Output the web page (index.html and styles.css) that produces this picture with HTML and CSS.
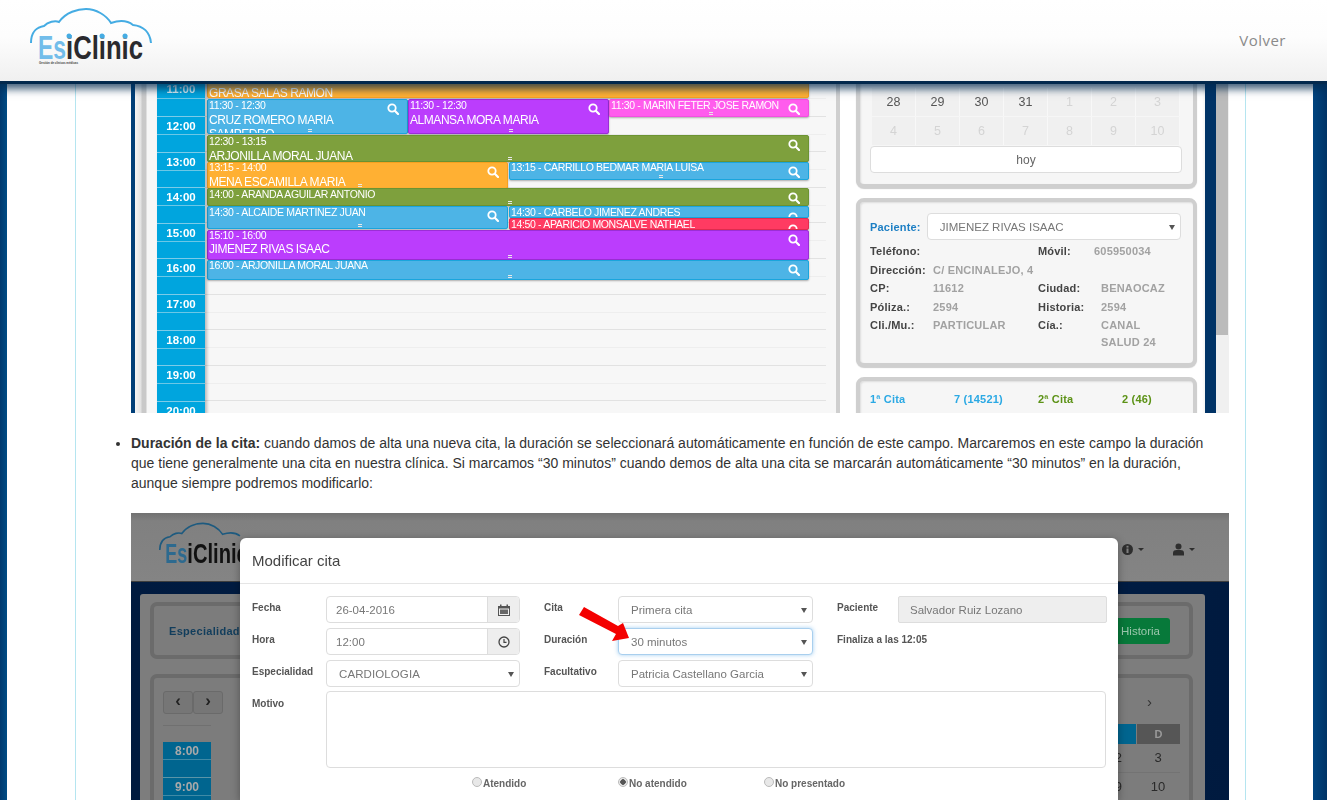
FILE: index.html
```html
<!DOCTYPE html>
<html lang="es">
<head>
    <meta charset="UTF-8">
    <title>EsiClinic - Ayuda</title>
    <link rel="stylesheet" href="styles.css">
</head>
<body>
    <header class="topbar">
        <svg class="logo" width="130" height="70" viewBox="0 0 130 70">
            <path class="logo-cloud" d="M3 37C3 26 9 21 16 20C20 16 27 14 31 16C38 6 50 3 58 3C68 3 78 9 83 17C92 14 100 15 105 19C115 20 122 26 123 37"/>
            <text class="logo-esi" x="10" y="53" textLength="28" lengthAdjust="spacingAndGlyphs">Es</text>
            <text class="logo-clinic" x="38" y="53" textLength="77" lengthAdjust="spacingAndGlyphs">iClinic</text>
            <circle class="logo-dot" cx="41" cy="30" r="2.500"/>
            <circle class="logo-dot" cx="74" cy="30" r="2.500"/>
            <circle class="logo-dot" cx="97" cy="30" r="2.500"/>
            <text class="logo-sub" x="11" y="58" textLength="39" lengthAdjust="spacingAndGlyphs">Gestión de clínicas médicas</text>
        </svg>
        <a class="back" href="#">Volver</a>
    </header>

    <div class="page">
        <main class="panel">
            <!-- primera captura: agenda y ficha de paciente -->
            <section class="shot shot-agenda">
                <div class="agenda-side">
                    <div class="agenda-hour first"><span>11:00</span></div>
                    <div class="agenda-hour"><span>12:00</span></div>
                    <div class="agenda-hour"><span>13:00</span></div>
                    <div class="agenda-hour"><span>14:00</span></div>
                    <div class="agenda-hour"><span>15:00</span></div>
                    <div class="agenda-hour"><span>16:00</span></div>
                    <div class="agenda-hour"><span>17:00</span></div>
                    <div class="agenda-hour"><span>18:00</span></div>
                    <div class="agenda-hour"><span>19:00</span></div>
                    <div class="agenda-hour"><span>20:00</span></div>
                </div>
                <div class="agenda-grid">
                    <div class="ev orange ev-grasa"><b class="ev-name">GRASA SALAS RAMON</b></div>
                    <div class="ev blue ev-cruz"><span>11:30 - 12:30</span><b class="ev-name">CRUZ ROMERO MARIA<br>SAMPEDRO</b><svg class="lens" viewBox="0 0 12 12"><use href="#lens"/></svg><i class="grip"></i></div>
                    <div class="ev purple ev-almansa"><span>11:30 - 12:30</span><b class="ev-name">ALMANSA MORA MARIA</b><svg class="lens" viewBox="0 0 12 12"><use href="#lens"/></svg><i class="grip"></i></div>
                    <div class="ev pink ev-marin"><span>11:30 - MARIN FETER JOSE RAMON</span><svg class="lens" viewBox="0 0 12 12"><use href="#lens"/></svg><i class="grip"></i></div>
                    <div class="ev green ev-arjonilla"><span>12:30 - 13:15</span><b class="ev-name">ARJONILLA MORAL JUANA</b><svg class="lens" viewBox="0 0 12 12"><use href="#lens"/></svg><i class="grip"></i></div>
                    <div class="ev orange ev-mena"><span>13:15 - 14:00</span><b class="ev-name">MENA ESCAMILLA MARIA</b><svg class="lens" viewBox="0 0 12 12"><use href="#lens"/></svg><i class="grip"></i></div>
                    <div class="ev blue ev-carrillo"><span>13:15 - CARRILLO BEDMAR MARIA LUISA</span><svg class="lens" viewBox="0 0 12 12"><use href="#lens"/></svg><i class="grip"></i></div>
                    <div class="ev green ev-aranda"><span>14:00 - ARANDA AGUILAR ANTONIO</span><svg class="lens" viewBox="0 0 12 12"><use href="#lens"/></svg><i class="grip"></i></div>
                    <div class="ev blue ev-alcaide"><span>14:30 - ALCAIDE MARTINEZ JUAN</span><svg class="lens" viewBox="0 0 12 12"><use href="#lens"/></svg><i class="grip"></i></div>
                    <div class="ev blue ev-carbelo"><span>14:30 - CARBELO JIMENEZ ANDRES</span><svg class="lens" viewBox="0 0 12 12"><use href="#lens"/></svg></div>
                    <div class="ev red ev-aparicio"><span>14:50 - APARICIO MONSALVE NATHAEL</span><svg class="lens" viewBox="0 0 12 12"><use href="#lens"/></svg></div>
                    <div class="ev purple ev-jimenez"><span>15:10 - 16:00</span><b class="ev-name">JIMENEZ RIVAS ISAAC</b><svg class="lens" viewBox="0 0 12 12"><use href="#lens"/></svg><i class="grip"></i></div>
                    <div class="ev blue ev-arjonilla2"><span>16:00 - ARJONILLA MORAL JUANA</span><svg class="lens" viewBox="0 0 12 12"><use href="#lens"/></svg><i class="grip"></i></div>
                </div>
                <div class="agenda-info">
                    <div class="card card-month">
                        <div class="month-row">
                            <span class="on">28</span><span class="on">29</span><span class="on">30</span><span class="on">31</span><span>1</span><span>2</span><span>3</span>
                        </div>
                        <div class="month-row">
                            <span>4</span><span>5</span><span>6</span><span>7</span><span>8</span><span>9</span><span>10</span>
                        </div>
                        <div class="today">hoy</div>
                    </div>
                    <div class="card card-patient">
                        <div class="patient-top">
                            <label>Paciente:</label>
                            <div class="fake-select">JIMENEZ RIVAS ISAAC<i class="arrow"></i></div>
                        </div>
                        <dl class="patient-data">
                            <dt>Teléfono:</dt><dd></dd><dt class="c3">Móvil:</dt><dd class="c4 phone">605950034</dd>
                            <dt>Dirección:</dt><dd class="wide">C/ ENCINALEJO, 4</dd>
                            <dt>CP:</dt><dd>11612</dd><dt class="c3">Ciudad:</dt><dd class="c4">BENAOCAZ</dd>
                            <dt>Póliza.:</dt><dd>2594</dd><dt class="c3">Historia:</dt><dd class="c4">2594</dd>
                            <dt>Cli./Mu.:</dt><dd>PARTICULAR</dd><dt class="c3">Cía.:</dt><dd class="c4">CANAL<br>SALUD 24</dd>
                        </dl>
                    </div>
                    <div class="card card-stats">
                        <span class="st-blue">1ª Cita</span><span class="st-blue">7 (14521)</span><span class="st-green">2ª Cita</span><span class="st-green">2 (46)</span>
                        <span class="st-purple">Tratamiento</span><span class="st-purple">3 (8)</span><span class="st-orange">Revisión</span><span class="st-orange">3 (6684)</span>
                    </div>
                </div>
                <div class="shot-edge"><i class="scroll-thumb"></i></div>
            </section>

            <ul class="help-list">
                <li><strong>Duración de la cita:</strong> cuando damos de alta una nueva cita, la duración se seleccionará automáticamente en función de este campo. Marcaremos en este campo la duración que tiene generalmente una cita en nuestra clínica. Si marcamos “30 minutos” cuando demos de alta una cita se marcarán automáticamente “30 minutos” en la duración, aunque siempre podremos modificarlo:</li>
            </ul>

            <!-- segunda captura: modal de modificar cita -->
            <section class="shot shot-modal">
                <div class="dim-top">
                    <svg class="logo dim-logo" width="103" height="55" viewBox="0 0 130 70">
                        <path class="logo-cloud" d="M3 37C3 26 9 21 16 20C20 16 27 14 31 16C38 6 50 3 58 3C68 3 78 9 83 17C92 14 100 15 105 19"/>
                        <text class="logo-esi" x="10" y="53" textLength="28" lengthAdjust="spacingAndGlyphs">Es</text>
                        <text class="logo-clinic" x="38" y="53" textLength="77" lengthAdjust="spacingAndGlyphs">iClinic</text>
                    </svg>
                    <div class="dim-tools">
                        <svg width="13" height="13" viewBox="0 0 13 13"><circle cx="6.500" cy="6.500" r="5.500" fill="#2e2e2e"/><rect x="5.500" y="5.500" width="2" height="4.500" fill="#808080"/><rect x="5.500" y="2.800" width="2" height="1.800" fill="#808080"/></svg>
                        <i class="caret"></i>
                        <svg class="dim-user" width="13" height="13" viewBox="0 0 13 13"><circle cx="6.500" cy="3.500" r="3" fill="#2e2e2e"/><path d="M1 12.500V9.500C1 7.800 3 7 4.500 7H8.500C10 7 12 7.800 12 9.500V12.500Z" fill="#2e2e2e"/></svg>
                        <i class="caret"></i>
                    </div>
                </div>
                <div class="dim-body">
                    <div class="dim-panel">
                        <div class="dim-card dim-filter">
                            <b>Especialidad</b>
                            <span class="dim-btn">Historia</span>
                        </div>
                        <div class="dim-card dim-cal">
                            <div class="dim-left">
                                <div class="dim-nav"><span>&lsaquo;</span><span>&rsaquo;</span></div>
                                <div class="dim-empty"></div>
                                <div class="dim-hour">8:00</div>
                                <div class="dim-hour">9:00</div>
                            </div>
                            <div class="dim-right">
                                <div class="dim-next">&rsaquo;</div>
                                <div class="dim-week"><i></i><span>D</span></div>
                                <div class="dim-day"><span>2</span><span>3</span></div>
                                <div class="dim-day"><span>9</span><span>10</span></div>
                            </div>
                        </div>
                    </div>
                </div>

                <div class="modal">
                    <h4 class="modal-title">Modificar cita</h4>
                    <form class="modal-form">
                        <label class="lead">Fecha</label>
                        <div class="field group">
                            <span class="value">26-04-2016</span>
                            <span class="addon"><svg width="12" height="12" viewBox="0 0 12 12"><path d="M0 2H2V0.500H3.500V2H8.500V0.500H10V2H12V12H0ZM1 4.500V11H11V4.500Z" fill="#555"/><path d="M2 5.500H10V10H2Z" fill="#666"/></svg></span>
                        </div>
                        <label>Cita</label>
                        <div class="field select"><span class="value">Primera cita</span><i class="arrow"></i></div>
                        <label>Paciente</label>
                        <div class="field disabled"><span class="value">Salvador Ruiz Lozano</span></div>

                        <label class="lead">Hora</label>
                        <div class="field group">
                            <span class="value">12:00</span>
                            <span class="addon"><svg width="12" height="12" viewBox="0 0 12 12"><circle cx="6" cy="6" r="5" fill="none" stroke="#444" stroke-width="1.300"/><path d="M6 3V6.300H8.500" fill="none" stroke="#444" stroke-width="1.200"/></svg></span>
                        </div>
                        <label>Duración</label>
                        <div class="field select focus"><span class="value">30 minutos</span><i class="arrow"></i></div>
                        <label class="finish">Finaliza a las 12:05</label>

                        <label class="lead">Especialidad</label>
                        <div class="field select"><span class="value up">CARDIOLOGIA</span><i class="arrow"></i></div>
                        <label>Facultativo</label>
                        <div class="field select"><span class="value">Patricia Castellano Garcia</span><i class="arrow"></i></div>
                        <span class="spacer"></span>

                        <label class="lead">Motivo</label>
                        <div class="field area"></div>
                    </form>
                    <div class="radios">
                        <label class="radio"><i></i>Atendido</label>
                        <label class="radio"><i class="checked"></i>No atendido</label>
                        <label class="radio"><i></i>No presentado</label>
                    </div>
                </div>

                <svg class="red-arrow" width="54" height="38" viewBox="0 0 54 38"><polygon points="7,0 41,19 46,16 52,31 35,34 39,27 2,8" fill="#f40000"/></svg>
            </section>
        </main>
    </div>

    <svg class="defs" width="0" height="0">
        <symbol id="lens" viewBox="0 0 12 12">
            <circle cx="5" cy="5" r="3.700" fill="none" stroke="#fff" stroke-width="1.800"/>
            <path d="M7.800 7.800L11 11" stroke="#fff" stroke-width="2.200" stroke-linecap="round"/>
        </symbol>
    </svg>
</body>
</html>
```

FILE: styles.css
```css
* {
    box-sizing: border-box;
}

html, body {
    height: 100%;
    overflow: hidden;
}

body {
    margin: 0;
    background: #fff;
    font-family: "Liberation Sans", Arial, sans-serif;
    color: #333;
}

/* cabecera */
.topbar {
    position: relative;
    z-index: 5;
    height: 81px;
    display: flex;
    align-items: flex-start;
    justify-content: space-between;
    padding: 6px 41px 0 28px;
    background: linear-gradient(#fff 0, #fdfdfd 45%, #f0f0f0 100%);
    box-shadow: 0 3px 0 #03294d, 0 6px 8px 2px rgba(3, 41, 77, .75);
}

.logo-cloud {
    fill: none;
    stroke: #45ace3;
    stroke-width: 2;
}

.logo-esi, .logo-clinic {
    font-size: 34px;
    font-weight: bold;
    font-family: "Liberation Sans", Arial, sans-serif;
}

.logo-esi {
    fill: #72bdea;
}

.logo-clinic {
    fill: #2a2a2e;
}

.logo-dot {
    fill: #45ace3;
}

.logo-sub {
    font-size: 4px;
    font-weight: bold;
    fill: #444;
}

.back {
    margin-top: 24px;
    font-family: "Open Sans", sans-serif;
    font-size: 15px;
    letter-spacing: .5px;
    color: #8a8a8a;
    text-decoration: none;
}

/* pagina */
.page {
    height: 719px;
    padding: 0 14px 0 7px;
    background: linear-gradient(90deg, #00396e 0, #004c85 7px, #fff 7px, #fff 1313px, #00447f 1313px, #003366 1327px);
}

.panel {
    width: 1171px;
    height: 719px;
    margin-left: 68px;
    padding: 0 15px 0 55px;
    background: #fff;
    border-left: 1px solid #b5e5f0;
    border-right: 1px solid #b5e5f0;
    overflow: hidden;
}

.shot {
    position: relative;
    width: 1098px;
    overflow: hidden;
    filter: blur(.35px);
}

/* captura de agenda */
.shot-agenda {
    height: 332px;
    display: grid;
    grid-template-columns: 26px 48px 621px 379px 24px;
    background: linear-gradient(90deg, #003f78 0, #003f78 4px, #f4f4f4 4px, #e2e2e2 10px, #c9c9c9 11px, #c9c9c9 15px, #f7f7f7 16px);
}

.agenda-side {
    grid-column: 2;
    background: #00a5de;
    box-shadow: 2px 0 3px rgba(0, 0, 0, .25);
    z-index: 1;
}

.agenda-hour {
    height: 35.600px;
    padding-top: 2px;
    border-bottom: 1px solid #7ccbe8;
    text-align: center;
    font-size: 11.500px;
    font-weight: bold;
    line-height: 15px;
    color: #fff;
    background: linear-gradient(#00a5de 17px, #6cc7e6 17px, #6cc7e6 18px, #00a5de 18px);
}

.agenda-hour.first {
    height: 36px;
    padding-top: 0;
}

.agenda-hour.first span {
    position: relative;
    top: 1px;
    color: #dff3fa;
}

.agenda-grid {
    position: relative;
    background:
        repeating-linear-gradient(#f7f7f7 0, #f7f7f7 17px, #eeeeee 17px, #eeeeee 18px, #f7f7f7 18px, #f7f7f7 34.600px, #e2e2e2 34.600px, #e2e2e2 35.600px);
}

/* citas sobre la rejilla */
.ev {
    position: absolute;
    overflow: hidden;
    padding: 0 1px;
    border: 1px solid rgba(0, 0, 0, .12);
    border-radius: 2px;
    box-shadow: 0 1px 2px rgba(0, 0, 0, .3);
    font-size: 10.500px;
    letter-spacing: -.35px;
    line-height: 12px;
    color: #fff;
    white-space: nowrap;
}

.ev span {
    display: block;
    margin-top: -1px;
}

.ev-name {
    display: block;
    margin-top: 2px;
    font-size: 12px;
    letter-spacing: -.45px;
    font-weight: normal;
    line-height: 14px;
}

.orange { background: #ffb033; border-color: #f5a020; }
.blue { background: #4db4e6; border-color: #1aa5dc; }
.purple { background: #bb3dfd; border-color: #9b2ed6; }
.pink { background: #ff5ced; border-color: #f24fe0; }
.green { background: #7ea03d; border-color: #6c9432; }
.red { background: #ff3b62; border-color: #e32c50; }

.lens {
    position: absolute;
    top: 3px;
    right: 8px;
    width: 12px;
    height: 12px;
}

.grip {
    position: absolute;
    bottom: 1px;
    left: 50%;
    width: 4px;
    height: 3px;
    border-top: 1px solid #e8e8e8;
    border-bottom: 1px solid #e8e8e8;
}

.ev-grasa { left: 2px; top: -10px; width: 602px; height: 27px; }
.ev-grasa .ev-name { margin-top: 15px; line-height: 12px; }
.ev-cruz { left: 2px; top: 18px; width: 201px; height: 35px; }
.ev-almansa { left: 203px; top: 18px; width: 201px; height: 35px; }
.ev-marin { left: 404px; top: 18px; width: 200px; height: 18px; }
.ev-arjonilla { left: 2px; top: 54px; width: 602px; height: 27px; }
.ev-mena { left: 2px; top: 81px; width: 301px; height: 27px; }
.ev-carrillo { left: 304px; top: 81px; width: 300px; height: 18px; }
.ev-aranda { left: 2px; top: 107px; width: 602px; height: 18px; }
.ev-alcaide { left: 2px; top: 125px; width: 301px; height: 23px; }
.ev-carbelo { left: 304px; top: 125px; width: 300px; height: 12px; }
.ev-aparicio { left: 304px; top: 137px; width: 300px; height: 12px; }
.ev-jimenez { left: 2px; top: 149px; width: 602px; height: 30px; }
.ev-arjonilla2 { left: 2px; top: 179px; width: 602px; height: 20px; }

.ev-mena span, .ev-jimenez span, .ev-carrillo span, .ev-arjonilla2 span { margin-top: -2px; }
.ev-jimenez .ev-name { margin-top: 1px; }
.ev-carbelo .lens, .ev-aparicio .lens { top: 5px; }

/* columna de ficha */
.agenda-info {
    display: flex;
    flex-direction: column;
    gap: 10px;
    margin-top: -60px;
    padding-left: 30px;
    background: linear-gradient(90deg, #f7f7f7 0, #f7f7f7 10px, #cfcfcf 10px, #cfcfcf 14px, #fff 14px, #fff 30px);
}

.card {
    width: 341px;
    border: 4px solid #cfcfcf;
    border-radius: 8px;
    background: #f6f6f6;
    box-shadow: inset 1px 1px 2px rgba(0,0,0,.1), 0 1px 1px rgba(0,0,0,.2);
}

.card-month {
    flex: none;
    height: 167px;
    padding: 63px 12px 0 10px;
}

.month-row {
    display: grid;
    grid-template-columns: repeat(7, 44px);
    margin: 0 0 1px 2px;
}

.month-row span {
    height: 28px;
    background: #f0f0f0;
    border-right: 1px solid #f8f8f8;
    text-align: center;
    font-size: 12.500px;
    line-height: 28px;
    color: #d4d4d4;
}

.month-row .on {
    color: #555;
}

.today {
    height: 27px;
    margin: 1px -1px 0 0;
    background: #fff;
    border: 1px solid #ddd;
    border-radius: 4px;
    text-align: center;
    font-size: 12px;
    line-height: 26px;
    color: #666;
}

.card-patient {
    flex: none;
    height: 169px;
    padding: 11px 12px 0 10px;
}

.patient-top {
    display: flex;
    align-items: center;
    gap: 6px;
    height: 27px;
    font-size: 11px;
    font-weight: bold;
    color: #1d7fc4;
    letter-spacing: .2px;
}

.fake-select {
    position: relative;
    flex: 1;
    height: 27px;
    padding-left: 12px;
    background: #fff;
    border: 1px solid #ddd;
    border-radius: 4px;
    font-size: 11.500px;
    font-weight: normal;
    line-height: 26px;
    color: #777;
    letter-spacing: 0;
}

.arrow {
    position: absolute;
    top: 11px;
    right: 5px;
    border-top: 5px solid #555;
    border-left: 3px solid transparent;
    border-right: 3px solid transparent;
}

.patient-data {
    display: grid;
    grid-template-columns: 63px 105px 63px 1fr;
    margin: 2px 0 0;
    font-size: 11px;
    line-height: 18.500px;
    font-weight: bold;
    letter-spacing: .2px;
}

.patient-data dt {
    grid-column: 1;
    color: #444;
}

.patient-data dd {
    margin: 0;
    color: #a2a2a2;
}

.patient-data .c3 {
    grid-column: 3;
}

.patient-data .c4 {
    grid-column: 4;
    line-height: 17px;
    padding-top: 1px;
}

.patient-data .wide {
    grid-column: 2 / 5;
}

.patient-data .phone {
    margin-left: -7px;
}

.card-stats {
    flex: none;
    display: grid;
    grid-template-columns: 84px 84px 84px 1fr;
    height: 60px;
    padding: 10px 0 0 10px;
    font-size: 11px;
    font-weight: bold;
    line-height: 17px;
    letter-spacing: .2px;
}

.st-blue { color: #2ba9e4; }
.st-green { color: #5c9216; }
.st-purple { color: #a92ff0; }
.st-orange { color: #f6941d; }

.shot-edge {
    position: relative;
    margin-left: -3px;
    background: linear-gradient(90deg, #fff 0, #f4f4f4 3px, #003366 3px, #003366 14px, #f0f0f0 14px);
}

.scroll-thumb {
    position: absolute;
    top: 0;
    left: 14px;
    width: 12px;
    height: 254px;
    background: #bbb;
}

/* texto */
.help-list {
    margin: 20px 0;
    padding: 0;
    list-style: disc;
    font-size: 14px;
    line-height: 20px;
    color: #333;
}

.help-list li {
    margin: 0;
}

/* captura del modal */
.shot-modal {
    height: 287px;
    background: #00193a;
}

.dim-top {
    position: relative;
    height: 69px;
    display: flex;
    justify-content: space-between;
    padding: 8px 34px 0 26px;
    background: linear-gradient(#717171, #808080 8px, #848484);
    border-bottom: 1px solid #3e3e3e;
}

.dim-logo .logo-cloud { stroke: #1d5a7f; }
.dim-logo .logo-esi { fill: #2d6a8f; }
.dim-logo .logo-clinic { fill: #111; }

.dim-tools {
    display: flex;
    align-items: center;
    height: 58px;
    margin-top: -1px;
}

.dim-user {
    margin-left: 28px;
}

.caret {
    margin-left: 4px;
    border-top: 3px solid #2e2e2e;
    border-left: 3px solid transparent;
    border-right: 3px solid transparent;
}

.dim-body {
    height: 218px;
    padding: 12px 24px 0 9px;
    background: linear-gradient(90deg, #001a3f, #00214b 60%, #001a3f);
}

.dim-panel {
    height: 206px;
    padding: 8px 12px 0 10px;
    background: #7d7d7d;
    border-radius: 3px 3px 0 0;
}

.dim-card {
    border: 4px solid #6b6b6b;
    border-radius: 7px;
    background: #7c7c7c;
}

.dim-filter {
    display: flex;
    align-items: center;
    justify-content: space-between;
    height: 57px;
    padding: 0 19px 0 15px;
    font-size: 11px;
    letter-spacing: .3px;
    color: #113d5c;
}

.dim-btn {
    width: 60px;
    height: 26px;
    padding-right: 10px;
    border-radius: 3px;
    background: #07793a;
    text-align: right;
    font-size: 11.500px;
    line-height: 26px;
    letter-spacing: 0;
    color: #9bc7ad;
}

.dim-cal {
    display: flex;
    justify-content: space-between;
    height: 140px;
    margin-top: 15px;
    padding: 13px 9px 0 9px;
}

.dim-left {
    width: 48px;
}

.dim-nav {
    display: flex;
    width: 61px;
    height: 23px;
}

.dim-nav span {
    width: 30px;
    background: #767676;
    border: 1px solid #6a6a6a;
    border-radius: 3px;
    text-align: center;
    font-size: 17px;
    font-weight: bold;
    line-height: 18px;
    color: #222;
}

.dim-empty {
    height: 17px;
    margin-top: 11px;
    border-top: 1px solid #707070;
}

.dim-hour {
    height: 36px;
    padding-top: 1px;
    border-bottom: 1px solid #5a95a8;
    background: linear-gradient(#00658f 17px, #3f8aa6 17px, #3f8aa6 18px, #00658f 18px);
    text-align: center;
    font-size: 12px;
    font-weight: bold;
    line-height: 16px;
    color: #a9a9a9;
}

.dim-right {
    width: 90px;
}

.dim-next {
    height: 22px;
    padding-left: 57px;
    font-size: 15px;
    line-height: 22px;
    color: #333;
}

.dim-week {
    display: flex;
    height: 20px;
    margin-top: 11px;
}

.dim-week i {
    width: 46px;
    background: #00658f;
}

.dim-week span {
    width: 43px;
    margin-left: 1px;
    background: #565656;
    text-align: center;
    font-size: 11px;
    font-weight: bold;
    line-height: 20px;
    color: #999;
}

.dim-day {
    display: flex;
    height: 29px;
    border-bottom: 1px solid #737373;
    font-size: 13px;
    line-height: 27px;
    color: #2a2a2a;
}

.dim-day span {
    width: 46px;
    padding-right: 14px;
    text-align: right;
}

.dim-day span + span {
    width: 44px;
    padding: 0;
    text-align: center;
}

.modal {
    position: absolute;
    top: 25px;
    left: 109px;
    width: 878px;
    height: 262px;
    background: #fff;
    border-radius: 6px 6px 0 0;
    box-shadow: 0 2px 8px rgba(0, 0, 0, .35);
}

.modal-title {
    height: 46px;
    margin: 0;
    padding: 14px 12px 0;
    border-bottom: 1px solid #e5e5e5;
    font-size: 15px;
    font-weight: normal;
    line-height: 18px;
    color: #444;
}

.modal-form {
    display: grid;
    grid-template-columns: 86px 194px 98px 195px 85px 209px;
    grid-auto-rows: 27px;
    row-gap: 5px;
    margin-top: 12px;
}

.modal-form label {
    padding: 6px 0 0 24px;
    font-size: 10px;
    font-weight: bold;
    line-height: 12px;
    color: #555;
    white-space: nowrap;
}

.modal-form .lead {
    padding-left: 12px;
}

.modal-form .finish {
    grid-column: span 2;
}

.spacer {
    grid-column: span 2;
}

.field {
    position: relative;
    display: flex;
    align-items: center;
    height: 27px;
    background: #fff;
    border: 1px solid #ddd;
    border-radius: 4px;
    font-size: 11.500px;
    color: #777;
    white-space: nowrap;
}

.field .value {
    flex: 1;
    padding-left: 9px;
}

.field.select .value {
    padding-left: 12px;
}

.field.select .up {
    letter-spacing: .1px;
}

.group {
    overflow: hidden;
}

.addon {
    display: flex;
    align-items: center;
    justify-content: center;
    align-self: stretch;
    width: 32px;
    background: #eee;
    border-left: 1px solid #ddd;
}

.focus {
    border-color: #a9cfee;
    box-shadow: 0 0 4px rgba(102, 175, 233, .6);
}

.disabled {
    background: #eee;
    border-radius: 2px;
}

.disabled .value {
    padding-left: 11px;
}

.area {
    grid-column: 2 / 7;
    height: 77px;
    margin-top: -1px;
    width: 780px;
}

.radios {
    position: absolute;
    top: 240px;
    left: 232px;
    display: grid;
    grid-template-columns: 146px 146px auto;
}

.radio {
    display: flex;
    align-items: center;
    font-size: 10px;
    font-weight: bold;
    color: #666;
}

.radio i {
    width: 10px;
    height: 10px;
    margin: -3px 1px 0 0;
    border: 1px solid #bbb;
    border-radius: 50%;
    background: #e8e8e8;
}

.radio .checked {
    background: radial-gradient(#555 0 2.500px, #e8e8e8 3px);
}

.red-arrow {
    position: absolute;
    top: 94px;
    left: 446px;
}

.defs {
    position: absolute;
}
```
